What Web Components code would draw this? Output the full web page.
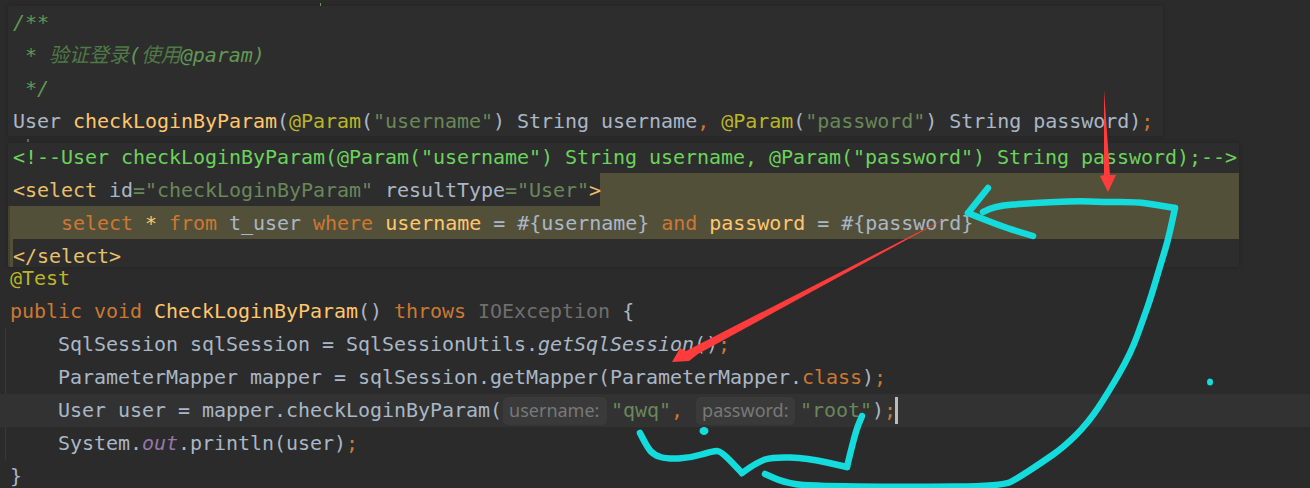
<!DOCTYPE html>
<html>
<head>
<meta charset="utf-8">
<title>checkLoginByParam</title>
<style>
  html, body { margin: 0; height: 488px; overflow: hidden; background: #2b2b2b; }
</style>
</head>
<body>
<editor-page>
  <code-panel style="--w:1155px;--h:130px;--top:6px">
    <code-line><x-t k="doc">/**</x-t></code-line>
    <code-line><x-t k="doc"> * <x-t k="cjk">验证登录</x-t>(<x-t k="cjk">使用</x-t>@param)</x-t></code-line>
    <code-line><x-t k="doc"> */</x-t></code-line>
    <code-line>User <x-t k="fn">checkLoginByParam</x-t>(<x-t k="ann">@Param</x-t>(<x-t k="str">"username"</x-t>) String username<x-t k="kw">,</x-t> <x-t k="ann">@Param</x-t>(<x-t k="str">"password"</x-t>) String password)<x-t k="kw">;</x-t></code-line>
  </code-panel>
  <code-panel style="--w:1231px;--h:124px;--top:7px">
    <code-line first><x-t k="xml">&lt;!--User checkLoginByParam(@Param("username") String username, @Param("password") String password);--&gt;</x-t></code-line>
    <code-line partial><x-t k="tag">&lt;select</x-t> id<x-t k="str">="checkLoginByParam"</x-t> resultType<x-t k="str">="User"</x-t><x-t k="tag">&gt;</x-t></code-line>
    <code-line selected>    <x-t k="kw">select</x-t> <x-t k="fn">*</x-t> <x-t k="kw">from</x-t> t_user <x-t k="kw">where</x-t> <x-t k="fn">username</x-t> = #{username} <x-t k="kw">and</x-t> <x-t k="fn">password</x-t> = #{password}</code-line>
    <code-line strip><x-t k="tag">&lt;/select&gt;</x-t></code-line>
  </code-panel>
  <editor-pane>
    <code-line><x-t k="ann">@Test</x-t></code-line>
    <code-line><x-t k="kw">public void</x-t> <x-t k="fn">CheckLoginByParam</x-t>() <x-t k="kw">throws</x-t> <x-t k="dim">IOException</x-t> {</code-line>
    <indent-group>
      <code-line>    SqlSession sqlSession = SqlSessionUtils.<x-t k="it">getSqlSession</x-t>()<x-t k="kw">;</x-t></code-line>
      <code-line>    ParameterMapper mapper = sqlSession.getMapper(ParameterMapper.<x-t k="kw">class</x-t>)<x-t k="kw">;</x-t></code-line>
      <code-line current>    User user = mapper.checkLoginByParam(<param-hint style="--l:1px;--r:4px;--cw:104px">username:</param-hint><x-t k="str">"qwq"</x-t><x-t k="kw">,</x-t><param-hint style="--l:13px;--r:5px;--cw:99px">password:</param-hint><x-t k="str">"root"</x-t>)<x-t k="kw">;</x-t><text-caret></text-caret></code-line>
      <code-line>    System.<x-t k="field">out</x-t>.println(user)<x-t k="kw">;</x-t></code-line>
    </indent-group>
    <code-line>}</code-line>
  </editor-pane>
  <ink-overlay></ink-overlay>
</editor-page>
<script>
// small helper, every element here is only markup + styles
function define(name, css, html) {
  customElements.define(name, class extends HTMLElement {
    constructor() {
      super();
      this.attachShadow({ mode: 'open' });
      this.shadowRoot.innerHTML = `<style>${css}</style>${html}`;
    }
  });
}

// hand strokes: runs through the midpoints so the pen line has no kinks
function smooth(points) {
  let d = `M${points[0][0]} ${points[0][1]}`;
  for (let i = 1; i < points.length - 1; i++) {
    const mx = (points[i][0] + points[i + 1][0]) / 2;
    const my = (points[i][1] + points[i + 1][1]) / 2;
    d += ` Q${points[i][0]} ${points[i][1]} ${mx} ${my}`;
  }
  const last = points[points.length - 1];
  return `${d} L${last[0]} ${last[1]}`;
}

const strokes = [
  [[988, 188], [968, 213]],
  [[968, 213], [1000, 226], [1033, 236]],
  [[983, 212], [993, 206], [1033, 203], [1077, 201], [1103, 202], [1137, 202], [1157, 205], [1175, 208]],
  [[1175, 208], [1169, 237], [1161, 263], [1151, 297], [1144, 317], [1131, 353], [1108, 393], [1088, 423], [1064, 447], [1041, 463], [1018, 478], [1003, 486], [907, 487], [807, 486], [783, 482], [765, 474]],
  [[640, 433], [647, 447], [654, 455], [667, 459], [690, 458], [713, 451], [721, 451], [742, 473]],
  [[742, 473], [757, 462], [773, 457], [807, 458], [847, 467]],
  [[847, 467], [855, 433], [862, 416]]
];

define('editor-page', `
  :host {
    display: block;
    position: relative;
    width: 1310px;
    height: 488px;
    overflow: hidden;
    background: #2b2b2b;
    color: #a9b7c6;
    font: 20px/33px "DejaVu Sans Mono", "Noto Sans CJK SC", monospace;
    letter-spacing: -0.04px;
  }
`, '<slot></slot>');

define('code-panel', `
  :host {
    display: block;
    box-sizing: border-box;
    width: var(--w);
    height: var(--h);
    margin: var(--top) 0 0 8px;
    overflow: hidden;
    background: #2d2d2d;
    border-radius: 2px;
    box-shadow: 0 0 5px rgba(0, 0, 0, .22);
  }
`, '<slot></slot>');

define('code-line', `
  :host {
    display: block;
    box-sizing: border-box;
    height: 33px;
    padding-left: 5px;
    white-space: pre;
  }
  :host([first]) { height: 30px; line-height: 28px; }
  :host([partial]) {
    padding-top: 1px;
    background: linear-gradient(to right, transparent 592px, #53503a 592px);
  }
  :host([selected]) {
    padding-top: 1px;
    background: linear-gradient(to right, #45432f 2px, #53503a 2px);
  }
  :host([strip]) {
    padding-top: 1px;
    background: linear-gradient(to right, #45432f 2px, #53503a 2px, #53503a 5px, transparent 5px);
  }
  :host([current]) {
    background: #323232;
    margin: 0 -300px 0 -5px;
    padding-left: 10px;
  }
`, '<slot></slot>');

define('x-t', `
  :host([k=doc]) { color: #629755; font-style: italic; }
  :host([k=cjk]) { color: #4f7a45; }
  :host([k=fn]) { color: #ffc66d; }
  :host([k=kw]) { color: #cc7832; }
  :host([k=ann]) { color: #bbb529; }
  :host([k=str]) { color: #6a8759; }
  :host([k=xml]) { color: #6bd35c; }
  :host([k=tag]) { color: #e8bf6a; }
  :host([k=dim]) { color: #6f6f6f; }
  :host([k=it]) { font-style: italic; }
  :host([k=field]) { color: #9876aa; font-style: italic; }
`, '<slot></slot>');

define('editor-pane', `
  :host {
    display: block;
    margin-top: -5px;
    margin-left: 5px;
  }
`, '<slot></slot>');

define('indent-group', `
  :host {
    display: block;
    box-shadow: inset 1px 0 #393939;
  }
`, '<slot></slot>');

define('param-hint', `
  :host {
    display: inline-block;
    box-sizing: border-box;
    width: var(--cw);
    height: 28px;
    margin: 0 var(--r) 0 var(--l);
    padding-left: 6px;
    background: #3a3a3a;
    border-radius: 5px;
    color: #787878;
    font: 18px/27px "Noto Sans", sans-serif;
    letter-spacing: 0;
  }
`, '<slot></slot>');

define('text-caret', `
  :host {
    display: inline-block;
    position: relative;
    width: 0;
    height: 27px;
    vertical-align: -7px;
  }
  :host::after {
    content: "";
    position: absolute;
    left: -1px;
    top: 0;
    width: 3px;
    height: 27px;
    background: #bbbbbb;
  }
`, '');

define('ink-overlay', `
  :host { position: absolute; left: 0; top: 0; width: 1310px; height: 488px; pointer-events: none; }
  svg { display: block; }
  .ink { fill: none; stroke: #14dcdc; stroke-width: 6.5px; stroke-linecap: round; stroke-linejoin: round; }
`, `
  <svg width="1310" height="488" viewBox="0 0 1310 488">
    <rect x="320" y="3" width="1" height="3" fill="#629755"/>
    <rect x="27" y="139" width="2" height="3" fill="#4f7a45"/>
    <polygon fill="#ff3b3b" points="1104,90 1110,175 1116,175 1108,192 1100,176 1104,175"/>
    <polygon fill="#ff3b3b" points="952,215 698,354 689,361 672,362 680,348 686,351"/>
    ${strokes.map((s) => `<path class="ink" d="${smooth(s)}"/>`).join('')}
    <ellipse cx="704" cy="431" rx="4.5" ry="4" fill="#14dcdc"/>
    <ellipse cx="1210" cy="382" rx="3" ry="3.5" fill="#14dcdc"/>
  </svg>
`);
</script>
</body>
</html>
